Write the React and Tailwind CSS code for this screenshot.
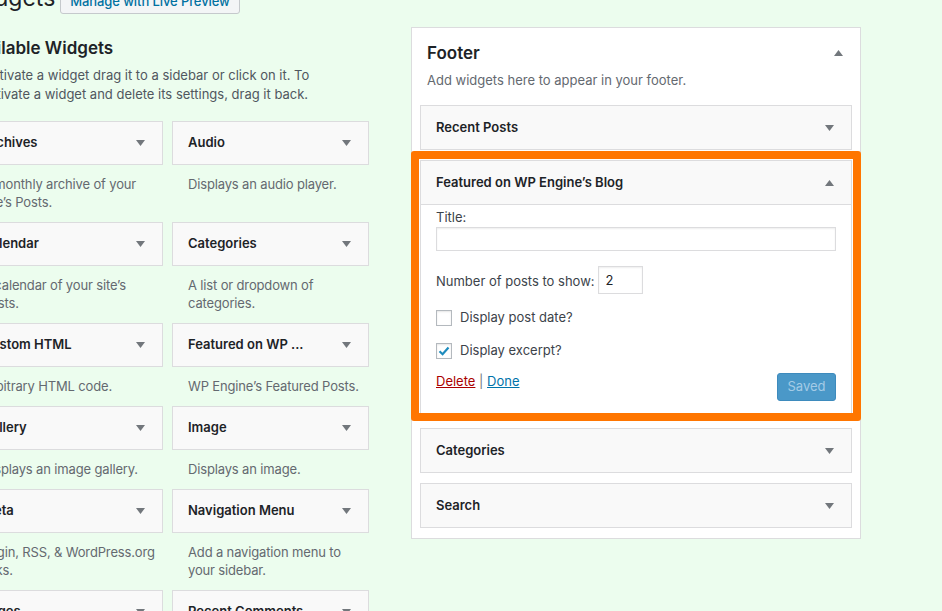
const Down = () => (
  <svg width="9" height="6" viewBox="0 0 9 6" className="shrink-0">
    <path d="M0 0 L9 0 L4.5 6 Z" fill="#72777c" />
  </svg>
);

const Up = () => (
  <svg width="9" height="6" viewBox="0 0 9 6" className="shrink-0">
    <path d="M0 6 L9 6 L4.5 0 Z" fill="#72777c" />
  </svg>
);

const widgets = [
  ["Archives", "A monthly archive of your site’s Posts."],
  ["Audio", "Displays an audio player."],
  ["Calendar", "A calendar of your site’s Posts."],
  ["Categories", "A list or dropdown of categories."],
  ["Custom HTML", "Arbitrary HTML code."],
  ["Featured on WP ...", "WP Engine’s Featured Posts."],
  ["Gallery", "Displays an image gallery."],
  ["Image", "Displays an image."],
  ["Meta", "Login, RSS, & WordPress.org links."],
  ["Navigation Menu", "Add a navigation menu to your sidebar."],
  ["Pages", "A list of your site’s Pages."],
  ["Recent Comments", "Your site’s most recent comments."],
];

function WidgetTitle({ name, tall }) {
  return (
    <div className={`${tall ? "h-[45px]" : "h-[44px]"} flex items-center justify-between pl-[15px] pr-[17px] bg-[#f9f9f9] border border-[#dcdcde]`}>
      <span className="text-[13px] font-semibold text-[#1d2327]">{name}</span>
      <Down />
    </div>
  );
}

export default function App() {
  return (
    <div className="min-h-screen bg-[#ecfdee] overflow-hidden font-['Inter',sans-serif] text-[#1d2327]">
      <div className="-mt-[16px] -ml-[34px] w-[980px]">

        {/* header */}
        <div className="flex items-center h-[29px]">
          <h1 className="text-[23px] leading-[29px] font-normal">Widgets</h1>
          <button className="ml-[5px] mt-[2px] h-[28px] px-[9px] pt-[4px] text-[13px] font-medium tracking-[-0.1px] text-[#0071a1] bg-[#f3f5f6] border border-[#c5c9cc] rounded-[3px]">
            Manage with Live Preview
          </button>
        </div>

        <div className="flex">
          {/* LEFT */}
          <div className="w-[403px]">
            <h2 className="mt-[23px] text-[17px] leading-[24px] font-semibold">Available Widgets</h2>
            <p className="mt-[6px] text-[13px] leading-[19px] text-[#50575e]">
              To activate a widget drag it to a sidebar or click on it. To<br />
              deactivate a widget and delete its settings, drag it back.
            </p>
            <div className="mt-[17px] grid grid-cols-[197px_197px] gap-x-[9px]">
              {widgets.map(([name, desc]) => (
                <div key={name}>
                  <WidgetTitle name={name} />
                  <p className="pt-[10px] pb-[11px] pl-[16px] text-[13px] leading-[18px] tracking-[-0.15px] text-[#646970]">{desc}</p>
                </div>
              ))}
            </div>
          </div>

          {/* RIGHT */}
          <div className="ml-[42px] mt-[14px] w-[450px] self-start bg-white border border-[#dcdcde] pb-[10px]">
            <div className="px-[15px] pt-[13px]">
              <div className="flex items-center justify-between pr-[2px]">
                <h3 className="text-[17px] leading-[24px] font-semibold">Footer</h3>
                <Up />
              </div>
              <p className="mt-[6px] text-[13px] leading-[18px] text-[#646970]">Add widgets here to appear in your footer.</p>
            </div>

            <div className="mt-[16px] px-[8px] flex flex-col gap-[10px]">
              <WidgetTitle name="Recent Posts" tall />

              <div className="relative">
                <div className="border border-[#dcdcde]">
                  <div className="h-[44px] flex items-center justify-between pl-[15px] pr-[17px] bg-[#f9f9f9] border-b border-[#dcdcde]">
                    <span className="text-[13px] font-semibold">Featured on WP Engine’s Blog</span>
                    <Up />
                  </div>
                  <div className="bg-white px-[15px] pt-[3px] pb-[16px] text-[13px] text-[#3c434a]">
                    <p className="leading-[18px]">Title:</p>
                    <input className="mt-[1px] w-full h-[24px] border border-[#dcdcde] shadow-[inset_0_1px_2px_rgba(0,0,0,0.07)] outline-none" />

                    <div className="mt-[15px] flex items-center">
                      <span className="mt-[3px]">Number of posts to show:</span>
                      <input
                        defaultValue="2"
                        className="ml-[3px] w-[45px] h-[28px] px-[7px] border border-[#dcdcde] shadow-[inset_0_1px_2px_rgba(0,0,0,0.07)] outline-none text-[13px] text-[#1d2327]"
                      />
                    </div>

                    <div className="mt-[16px] flex items-center h-[16px]">
                      <span className="w-[16px] h-[16px] border border-[#b4b9be] shadow-[inset_0_1px_2px_rgba(0,0,0,0.1)]" />
                      <span className="ml-[8px]">Display post date?</span>
                    </div>

                    <div className="mt-[17px] flex items-center h-[16px]">
                      <span className="w-[16px] h-[16px] border border-[#b4b9be] shadow-[inset_0_1px_2px_rgba(0,0,0,0.1)] flex items-center justify-center">
                        <svg width="12" height="10" viewBox="0 0 12 10">
                          <path d="M1.5 5.2 L4.6 8.2 L10.5 1.5" stroke="#1e8cbe" strokeWidth="2.2" fill="none" />
                        </svg>
                      </span>
                      <span className="ml-[8px]">Display excerpt?</span>
                    </div>

                    <div className="mt-[13px] flex items-start justify-between">
                      <div className="leading-[18px]">
                        <a className="text-[#a00] underline">Delete</a>
                        <span className="text-[#72777c]"> | </span>
                        <a className="text-[#0073aa] underline">Done</a>
                      </div>
                      <button className="mt-[1px] w-[59px] h-[28px] rounded-[3px] bg-[#4a98c8] border border-[#3e8bbd] text-[#a4cbe6] text-[13px]">
                        Saved
                      </button>
                    </div>
                  </div>
                </div>
                {/* highlight */}
                <div className="absolute -top-[9px] -bottom-[3px] -left-[9px] -right-[9px] border-[8px] border-[#ff7600] rounded-[3px] pointer-events-none" />
              </div>

              <WidgetTitle name="Categories" tall />
              <WidgetTitle name="Search" tall />
            </div>
          </div>
        </div>
      </div>
    </div>
  );
}
